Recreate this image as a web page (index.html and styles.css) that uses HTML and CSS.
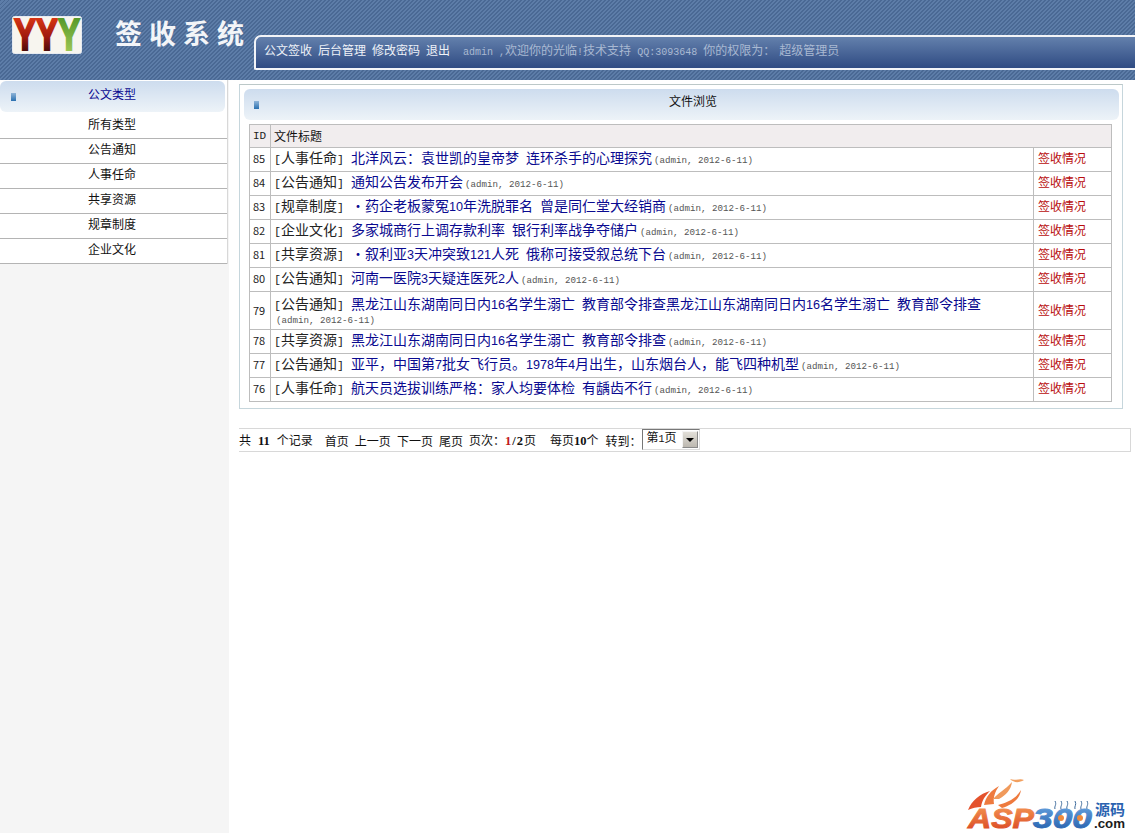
FILE: index.html
```html
<!DOCTYPE html>
<html lang="zh">
<head>
<meta charset="utf-8">
<title>签收系统</title>
<link rel="stylesheet" href="styles.css">
</head>
<body>
<header class="top">
  <div class="brand">
    <svg class="logo" width="70" height="38" viewBox="0 0 70 38">
      <defs>
        <linearGradient id="red" x1="0" y1="0" x2="0" y2="1"><stop offset="0.1" stop-color="#e23a14"/><stop offset="0.55" stop-color="#a01a10"/><stop offset="0.95" stop-color="#2e0706"/></linearGradient>
        <linearGradient id="green" x1="0" y1="0" x2="0" y2="1"><stop offset="0.1" stop-color="#4f9426"/><stop offset="0.95" stop-color="#a6cc58"/></linearGradient>
      </defs>
      <rect x="0.5" y="0.5" width="69" height="37" rx="2" fill="#f7f5ef" stroke="#e6eaf0"/>
      <text class="logo-mark" transform="scale(1 1.3)" x="2" y="26" textLength="66" lengthAdjust="spacingAndGlyphs"><tspan fill="url(#red)" stroke="url(#red)">YY</tspan><tspan fill="url(#green)" stroke="url(#green)">Y</tspan></text>
    </svg>
    <h1 class="brand-title">签收系统</h1>
  </div>
  <nav class="topnav">
    <a>公文签收</a><a>后台管理</a><a>修改密码</a><a>退出</a>
    <span class="welcome"><span class="mono">admin ,</span>欢迎你的光临<span class="mono">!</span>技术支持<span class="mono"> QQ:3093648 </span>你的权限为：<span class="role">超级管理员</span></span>
  </nav>
</header>
<div class="layout">
  <aside class="side">
    <div class="side-top">
      <div class="bar side-bar"><i class="bullet"></i><b>公文类型</b></div>
      <ul class="side-list">
        <li>所有类型</li><li>公告通知</li><li>人事任命</li><li>共享资源</li><li>规章制度</li><li>企业文化</li>
      </ul>
    </div>
  </aside>
  <main class="main">
    <section class="panel">
      <div class="bar panel-bar"><i class="bullet"></i><b>文件浏览</b></div>
      <table class="files">
        <colgroup><col class="col-id"><col><col class="col-act"></colgroup>
        <thead><tr><th class="c-id c-head">ID</th><th colspan="2">文件标题</th></tr></thead>
        <tbody>
          <tr><td class="c-id">85</td><td><span class="lat">[</span>人事任命<span class="lat">] </span><a>北洋风云：袁世凯的皇帝梦<span class="lat"> </span>连环杀手的心理探究</a><small>(admin, 2012-6-11)</small></td><td class="c-act">签收情况</td></tr>
          <tr><td class="c-id">84</td><td><span class="lat">[</span>公告通知<span class="lat">] </span><a>通知公告发布开会</a><small>(admin, 2012-6-11)</small></td><td class="c-act">签收情况</td></tr>
          <tr><td class="c-id">83</td><td><span class="lat">[</span>规章制度<span class="lat">] </span><a>・药企老板蒙冤<span class="num">10</span>年洗脱罪名<span class="lat"> </span>曾是同仁堂大经销商</a><small>(admin, 2012-6-11)</small></td><td class="c-act">签收情况</td></tr>
          <tr><td class="c-id">82</td><td><span class="lat">[</span>企业文化<span class="lat">] </span><a>多家城商行上调存款利率<span class="lat"> </span>银行利率战争夺储户</a><small>(admin, 2012-6-11)</small></td><td class="c-act">签收情况</td></tr>
          <tr><td class="c-id">81</td><td><span class="lat">[</span>共享资源<span class="lat">] </span><a>・叙利亚<span class="num">3</span>天冲突致<span class="num">121</span>人死<span class="lat"> </span>俄称可接受叙总统下台</a><small>(admin, 2012-6-11)</small></td><td class="c-act">签收情况</td></tr>
          <tr><td class="c-id">80</td><td><span class="lat">[</span>公告通知<span class="lat">] </span><a>河南一医院<span class="num">3</span>天疑连医死<span class="num">2</span>人</a><small>(admin, 2012-6-11)</small></td><td class="c-act">签收情况</td></tr>
          <tr class="tall"><td class="c-id">79</td><td><span class="lat">[</span>公告通知<span class="lat">] </span><a>黑龙江山东湖南同日内<span class="num">16</span>名学生溺亡<span class="lat"> </span>教育部令排查黑龙江山东湖南同日内<span class="num">16</span>名学生溺亡<span class="lat"> </span>教育部令排查</a><br><small class="wrap">(admin, 2012-6-11)</small></td><td class="c-act">签收情况</td></tr>
          <tr><td class="c-id">78</td><td><span class="lat">[</span>共享资源<span class="lat">] </span><a>黑龙江山东湖南同日内<span class="num">16</span>名学生溺亡<span class="lat"> </span>教育部令排查</a><small>(admin, 2012-6-11)</small></td><td class="c-act">签收情况</td></tr>
          <tr><td class="c-id">77</td><td><span class="lat">[</span>公告通知<span class="lat">] </span><a>亚平，中国第<span class="num">7</span>批女飞行员。<span class="num">1978</span>年<span class="num">4</span>月出生，山东烟台人，能飞四种机型</a><small>(admin, 2012-6-11)</small></td><td class="c-act">签收情况</td></tr>
          <tr><td class="c-id">76</td><td><span class="lat">[</span>人事任命<span class="lat">] </span><a>航天员选拔训练严格：家人均要体检<span class="lat"> </span>有龋齿不行</a><small>(admin, 2012-6-11)</small></td><td class="c-act">签收情况</td></tr>
        </tbody>
      </table>
    </section>
    <div class="pager">
      <span class="pg-count">共<b class="pg-total">11</b>个记录</span>
      <span class="pg-links"><a>首页</a><a>上一页</a><a>下一页</a><a>尾页</a></span>
      <span>页次：<b class="pg-cur"><em>1</em>/2</b>页</span>
      <span class="pg-size">每页<b>10</b>个</span>
      <span class="pg-jump">转到：</span>
      <span class="select"><span class="select-val">第<span class="sel-num">1</span>页</span><span class="select-btn"><i></i></span></span>
    </div>
  </main>
</div>
<svg class="watermark" width="170" height="58" viewBox="0 0 170 58">
  <defs>
    <linearGradient id="wm-red" x1="0" y1="0" x2="0" y2="1"><stop offset="0.2" stop-color="#f08a4c"/><stop offset="1" stop-color="#d8401e"/></linearGradient>
    <linearGradient id="wm-blue" x1="0" y1="0" x2="0" y2="1"><stop offset="0.2" stop-color="#5a96d6"/><stop offset="1" stop-color="#1f5aa8"/></linearGradient>
  </defs>
  <path d="M8 35C12 25 20 19 30 16C25 21 22 25 21 32C17 32 12 33 8 35Z" fill="#e4522c"/>
  <path d="M24 30C26 22 30 16 39 11C35 17 33 22 34 29Z" fill="#ee7a3e"/>
  <path d="M33 24C38 18 45 15 52 7C51 15 46 20 39 24Z" fill="#f09a5c"/>
  <path d="M38 30C46 28 56 24 61 15C60 24 52 30 42 33Z" fill="#ee7a3e"/>
  <path d="M50 4C55 6 60 3 64 5C59 8 54 8 50 4Z" fill="#f2a060"/>
  <path d="M95 34c-1-3 2-4 0-8M101 34c-1-3 2-4 0-8M107 34c-1-3 2-4 0-8M115 34c-1-3 2-4 0-8M121 34c-1-3 2-4 0-8M127 34c-1-3 2-4 0-8" fill="none" stroke="#3c6a9c" stroke-width="1"/>
  <text class="wm-big" x="8" y="53" textLength="66" lengthAdjust="spacingAndGlyphs" fill="url(#wm-red)" stroke="url(#wm-red)">ASP</text>
  <text class="wm-big" x="73" y="53" textLength="59" lengthAdjust="spacingAndGlyphs" fill="url(#wm-blue)" stroke="url(#wm-blue)">300</text>
  <circle cx="101" cy="43" r="3" fill="#ef8a3c"/>
  <circle cx="120" cy="43" r="3" fill="#ef8a3c"/>
  <text class="wm-cn" x="135" y="40" fill="#2a62b0">源码</text>
  <text class="wm-com" x="134" y="53" textLength="31" lengthAdjust="spacingAndGlyphs" fill="#1c1c1c">.com</text>
</svg>
</body>
</html>
```
FILE: styles.css
```css
* { box-sizing: border-box; }
html, body { margin: 0; height: 100%; }
body {
  font-family: "Noto Sans CJK SC", "Liberation Sans", sans-serif;
  font-size: 12px;
  color: #111;
  background: #fff;
  height: 833px;
  overflow: hidden;
  position: relative;
}
a { color: inherit; text-decoration: none; }
ul { margin: 0; padding: 0; list-style: none; }

.top {
  height: 80px;
  display: flex;
  background: repeating-linear-gradient(135deg, #4a6994 0 1.41px, #5d7da8 1.41px 2.83px);
}
.brand { width: 254px; flex: none; display: flex; align-items: flex-start; padding: 16px 0 0 12px; }
.logo { display: block; flex: none; overflow: visible; }
.logo-mark { font-family: "Liberation Sans", sans-serif; font-weight: 700; font-size: 34px; stroke-width: 1.6px; }
.brand-title {
  margin: -1px 0 0 33px;
  font-size: 27px;
  line-height: 36px;
  font-weight: 700;
  letter-spacing: 7px;
  color: #f3f5f8;
  white-space: nowrap;
}
.topnav {
  flex: 1;
  height: 35px;
  margin-top: 35px;
  border: 2px solid #f2f4f8;
  border-right: 0;
  border-radius: 7px 0 0 2px;
  background: linear-gradient(#6380ac, #2f4b83);
  color: #eef2f8;
  display: flex;
  align-items: center;
  padding: 0 0 6px 8px;
  gap: 6px;
  white-space: nowrap;
}
.welcome { margin-left: 7px; color: #a9b9d2; }
.mono { font-family: "Liberation Mono", monospace; font-size: 10px; white-space: pre; }
.role { margin-left: 4px; }

.layout { display: flex; height: 753px; }
.side { width: 229px; flex: none; background: #f5f5f5; padding-right: 1px; }
.side-top { background: #fff; padding-top: 1px; border-right: 1px solid #d8d8d8; }
.bar {
  height: 31px;
  display: flex;
  align-items: center;
  border-radius: 6px;
  background: linear-gradient(#cddcee, #edf3f8);
  position: relative;
}
.bar b { font-weight: 400; }
.bullet {
  width: 5px;
  height: 8px;
  background: linear-gradient(#8fb4d8, #2a70b0);
  flex: none;
}
.side-bar { width: 225px; padding-left: 11px; }
.side-bar b { margin: -7px 0 0 72px; color: #0a0a90; }
.side-list { padding-top: 1px; }
.side-list li {
  height: 25px;
  line-height: 20px;
  padding-left: 88px;
  border-bottom: 1px solid #b4b4b4;
}
.side-list li:first-child { height: 26px; line-height: 22px; }

.main { flex: 1; padding: 4px 5px 0 10px; min-width: 0; }
.panel {
  width: 884px;
  height: 325px;
  border: 1px solid #c6d6dc;
  border-top-color: #bcc8c8;
  padding: 4px;
}
.panel-bar { width: 875px; margin-bottom: 4px; padding-left: 10px; }
.panel-bar b { margin: -8px 0 0 410px; }
.files {
  width: 863px;
  margin-left: 5px;
  border-collapse: collapse;
  table-layout: fixed;
}
.col-id { width: 21px; }
.col-act { width: 78px; }
.files th, .files td { border: 1px solid #bdbdbd; padding: 0 3px 5px; height: 24px; line-height: 18px; }
.files th { text-align: left; background: #f1edee; font-weight: 400; height: 23px; padding-bottom: 0; }
.files td { font-size: 14px; color: #222; white-space: nowrap; }
.files tr.tall td { height: 38px; line-height: 14px; padding-bottom: 2px; }
.files .c-id { font-size: 11px; padding-left: 3px; padding-right: 0; color: #222; }
.files td.c-id { padding-bottom: 4px; }
.files .c-head { font-family: "Liberation Mono", monospace; }
.files td.c-act { font-size: 12px; color: #b80c0c; padding: 0 3px 3px 4px; }
.files a { color: #0a0a90; }
.lat { font-family: "Liberation Mono", monospace; font-size: 11.67px; line-height: 0; white-space: pre; }
.num { font-family: "Liberation Sans", sans-serif; font-size: 12.6px; line-height: 0; }
.files small { font-family: "Liberation Mono", monospace; font-size: 9.17px; line-height: 0; color: #555; margin-left: 2px; }

.pager {
  margin-top: 19px;
  width: 892px;
  height: 24px;
  border: 1px solid #d8d8d8;
  border-left: 0;
  display: flex;
  align-items: center;
  gap: 6px;
  white-space: nowrap;
}
.pager b { font-family: "Liberation Serif", serif; font-size: 12.5px; }
.pager em { font-style: normal; color: #c01818; }
.pg-total { margin: 0 7px; }
.pg-cur { letter-spacing: 1px; }
.pg-links { display: inline-flex; gap: 6px; margin-left: 6px; }
.pg-size { margin-left: 8px; }
.pg-jump { margin-left: 1px; }
.select {
  margin: 0 0 1px -5px;
  width: 58px;
  height: 21px;
  display: flex;
  align-items: flex-start;
  justify-content: space-between;
  border: 1px solid #777;
  border-right-color: #ddd;
  border-bottom-color: #ddd;
  background: #fff;
  padding: 0 0 0 3px;
  line-height: 14px;
}
.sel-num { font-family: "Liberation Mono", monospace; font-size: 10px; }
.select-btn {
  width: 16px;
  height: 17px;
  margin: 1px 1px 0 0;
  background: linear-gradient(#e2dfd8, #bcb8b0);
  border: 1px solid #8a8a8a;
  border-top-color: #f4f4f4;
  border-left-color: #f4f4f4;
  display: flex;
  align-items: center;
  justify-content: center;
}
.select-btn i { border: 4px solid transparent; border-top: 4px solid #000; border-bottom: 0; }

.watermark {
  position: absolute;
  right: 5px;
  bottom: 0;
  display: block;
}
.wm-big { font-family: "Liberation Sans", sans-serif; font-style: italic; font-weight: 700; font-size: 28px; stroke-width: 0.9px; }
.wm-cn { font-family: "Noto Sans CJK SC", sans-serif; font-weight: 700; font-size: 15px; }
.wm-com { font-family: "Liberation Sans", sans-serif; font-weight: 700; font-size: 12px; }
```
